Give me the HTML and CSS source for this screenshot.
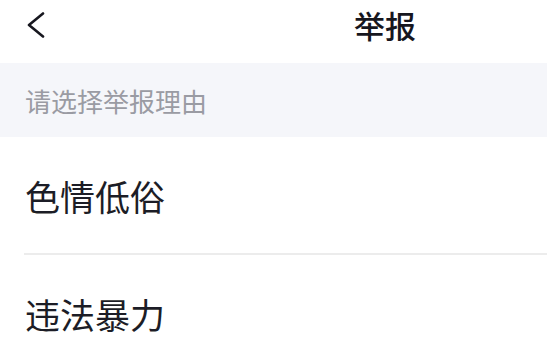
FILE: index.html
```html
<!DOCTYPE html>
<html lang="zh-CN">
<head>
  <meta charset="utf-8">
  <title>举报</title>
  <meta name="viewport" content="width=device-width, initial-scale=1">
  <link rel="stylesheet" href="styles.css">
</head>
<body>
  <div class="header">
    <a class="back" href="#">
      <svg width="20" height="26" viewBox="0 0 20 26">
        <path d="M17 1.5 L3 13 L17 24.5" fill="none" stroke="#17171f" stroke-width="2.6" stroke-linecap="round" stroke-linejoin="round"/>
      </svg>
    </a>
    <h1 class="title">举报</h1>
  </div>

  <div class="section-tip">请选择举报理由</div>

  <ul class="reason-list">
    <li class="reason">色情低俗</li>
    <li class="reason">违法暴力</li>
  </ul>
</body>
</html>
```

FILE: styles.css
```css
body {
  margin: 0;
  background: #fff;
  font-family: "Noto Sans CJK SC", "Noto Sans", sans-serif;
  color: #1c1d26;
}
.header {
  display: flex;
  align-items: center;
  height: 49px;
  padding: 0 0 14px 26px;
}
.back {
  display: flex;
  width: 20px;
  height: 26px;
}
.title {
  margin: 0 0 0 308px;
  font-size: 31px;
  font-weight: 500;
  color: #16161e;
  line-height: 1;
}
.section-tip {
  height: 74px;
  display: flex;
  align-items: center;
  padding-left: 25px;
  background-color: #f5f6fa;
  font-size: 26px;
  color: #9a9ba3;
}
.reason-list {
  list-style: none;
  margin: 0;
  padding: 0 0 0 24px;
}
.reason {
  height: 116px;
  display: flex;
  align-items: center;
  padding-left: 1px;
  font-size: 35px;
  border-bottom: 2px solid #ececec;
}
.reason:last-child {
  border-bottom: none;
}
```
